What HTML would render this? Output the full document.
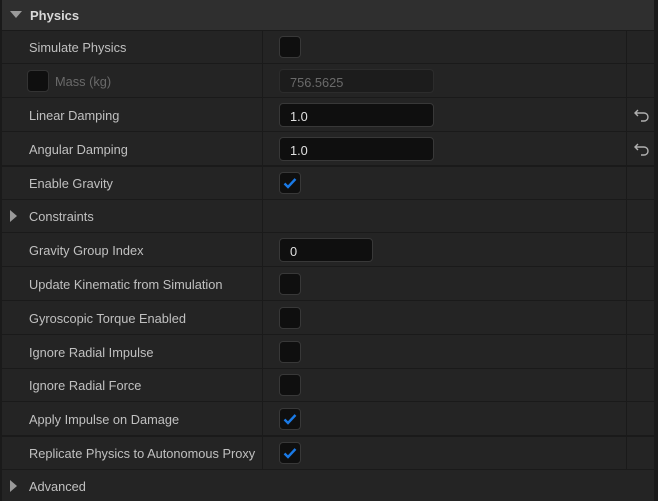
<!DOCTYPE html>
<html><head><style>
*{margin:0;padding:0;box-sizing:border-box}
body{width:658px;height:501px;background:#1a1a1a;font-family:"Liberation Sans",sans-serif;font-size:12.8px;color:#c0c0c0;position:relative;overflow:hidden}
.hdr{position:absolute;left:2px;top:0;width:652px;height:30px;background:#2f2f2f;color:#d8d8d8;font-weight:bold;font-size:13px}
.hdr span{position:absolute;left:28px;top:8px}
.tri{position:absolute;left:8px;top:11px;width:0;height:0;border-left:6px solid transparent;border-right:6px solid transparent;border-top:7px solid #9a9a9a}
.row{position:absolute;left:2px;width:652px;background:#242424}
.row .l{position:absolute;left:27px;top:50%;transform:translateY(-48%);white-space:nowrap}
.d1{position:absolute;left:260px;top:0;bottom:0;width:1px;background:#1a1a1a}
.d2{position:absolute;left:624px;top:0;bottom:0;width:1px;background:#1a1a1a}
.cb{position:absolute;left:277px;top:50%;margin-top:-11px;width:22px;height:22px;background:#0f0f0f;border:1px solid #383838;border-radius:4px}
.cb svg{position:absolute;left:3px;top:3px}
.inp{position:absolute;left:277px;top:50%;margin-top:-12px;width:155px;height:24px;background:#0f0f0f;border:1px solid #383838;border-radius:4px;color:#e0e0e0;padding:5px 0 0 10px}
.rt{position:absolute;left:8px;top:50%;margin-top:-6px;width:0;height:0;border-top:6px solid transparent;border-bottom:6px solid transparent;border-left:7px solid #9a9a9a}
.rs{position:absolute;left:631px;top:50%;margin-top:-7px}
</style></head><body>
<div class="hdr"><div class="tri"></div><span>Physics</span></div>

<div class="row" style="top:31px;height:32px"><span class="l">Simulate Physics</span><div class="d1"></div><div class="d2"></div><div class="cb"></div></div>
<div class="row" style="top:64px;height:33px"><div class="cb" style="left:25px;border-color:#333"></div><span class="l" style="left:53px;color:#6a6a6a">Mass (kg)</span><div class="d1"></div><div class="d2"></div><div class="inp" style="background:#1c1c1c;border-color:#2c2c2c;color:#6a6a6a">756.5625</div></div>
<div class="row" style="top:98px;height:33px"><span class="l">Linear Damping</span><div class="d1"></div><div class="d2"></div><div class="inp">1.0</div>
<svg class="rs" width="18" height="14" viewBox="0 0 18 14"><path d="M5 2 L2 5 L5 8 M2 5 H11 A4 4 0 0 1 11 13 H8" fill="none" stroke="#b0b0b0" stroke-width="1.4"/></svg></div>
<div class="row" style="top:132px;height:33px"><span class="l">Angular Damping</span><div class="d1"></div><div class="d2"></div><div class="inp">1.0</div>
<svg class="rs" width="18" height="14" viewBox="0 0 18 14"><path d="M5 2 L2 5 L5 8 M2 5 H11 A4 4 0 0 1 11 13 H8" fill="none" stroke="#b0b0b0" stroke-width="1.4"/></svg></div>
<div class="row" style="top:167px;height:32px"><span class="l">Enable Gravity</span><div class="d1"></div><div class="d2"></div><div class="cb"><svg width="14" height="14" viewBox="0 0 14 14"><path d="M1.5 7.5 L5 11 L12.5 3" fill="none" stroke="#1a7ae6" stroke-width="2.4"/></svg></div></div>
<div class="row" style="top:200px;height:32px"><div class="rt"></div><span class="l">Constraints</span><div class="d1"></div><div class="d2"></div></div>
<div class="row" style="top:233px;height:33px"><span class="l">Gravity Group Index</span><div class="d1"></div><div class="d2"></div><div class="inp" style="width:94px">0</div></div>
<div class="row" style="top:267px;height:33px"><span class="l">Update Kinematic from Simulation</span><div class="d1"></div><div class="d2"></div><div class="cb"></div></div>
<div class="row" style="top:301px;height:33px"><span class="l">Gyroscopic Torque Enabled</span><div class="d1"></div><div class="d2"></div><div class="cb"></div></div>
<div class="row" style="top:335px;height:33px"><span class="l">Ignore Radial Impulse</span><div class="d1"></div><div class="d2"></div><div class="cb"></div></div>
<div class="row" style="top:369px;height:32px"><span class="l">Ignore Radial Force</span><div class="d1"></div><div class="d2"></div><div class="cb"></div></div>
<div class="row" style="top:402px;height:33px"><span class="l">Apply Impulse on Damage</span><div class="d1"></div><div class="d2"></div><div class="cb"><svg width="14" height="14" viewBox="0 0 14 14"><path d="M1.5 7.5 L5 11 L12.5 3" fill="none" stroke="#1a7ae6" stroke-width="2.4"/></svg></div></div>
<div class="row" style="top:437px;height:32px"><span class="l">Replicate Physics to Autonomous Proxy</span><div class="d1"></div><div class="d2"></div><div class="cb"><svg width="14" height="14" viewBox="0 0 14 14"><path d="M1.5 7.5 L5 11 L12.5 3" fill="none" stroke="#1a7ae6" stroke-width="2.4"/></svg></div></div>
<div class="row" style="top:470px;height:31px"><div class="rt"></div><span class="l">Advanced</span></div>
</body></html>
